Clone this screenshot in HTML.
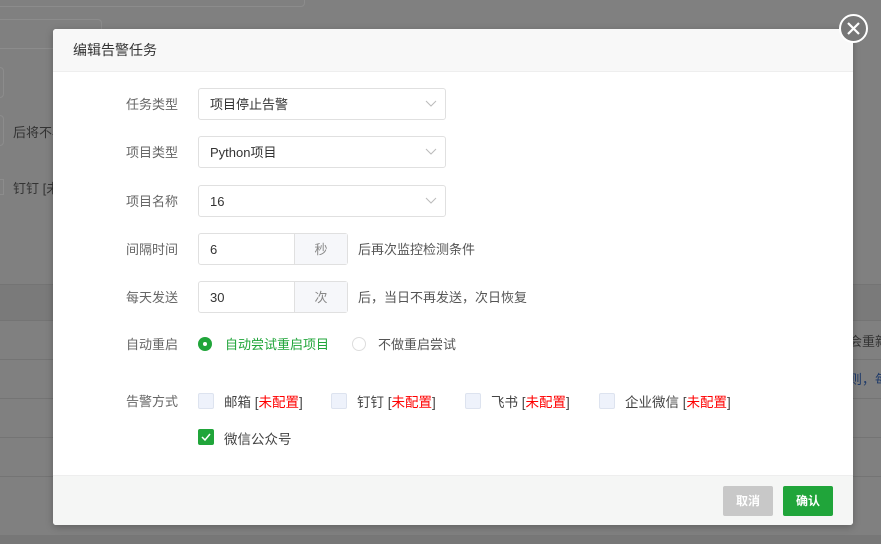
<!DOCTYPE html>
<html><head><meta charset="utf-8"><style>
*{box-sizing:border-box;margin:0;padding:0}
body{width:881px;height:544px;overflow:hidden;background:#808080;font-family:"Liberation Sans","Noto Sans CJK SC",sans-serif;font-size:13px;color:#555;position:relative}
.a{position:absolute;white-space:nowrap}
.bgl{position:absolute;left:0;width:881px;height:1px;background:#747474}
.modal{position:absolute;left:53px;top:29px;width:800px;height:496px;background:#fff;border-radius:3px;overflow:hidden;box-shadow:0 2px 8px rgba(0,0,0,.25)}
.hd{height:43px;background:#f8f8f8;border-bottom:1px solid #eee;padding-left:20px;line-height:43px;font-size:14px;color:#333}
.ft{position:absolute;left:0;bottom:0;width:800px;height:50px;background:#f5f6f5;border-top:1px solid #eee}
.lbl{position:absolute;width:125px;text-align:right;color:#666;font-size:13px;left:0}
.sel{position:absolute;left:145px;width:248px;height:32px;border:1px solid #e0e0e0;border-radius:3px;padding-left:11px;line-height:31px;color:#333}
.sel svg{position:absolute;right:8px;top:11px}
.grp{position:absolute;left:145px;width:150px;height:32px;border:1px solid #e0e0e0;border-radius:3px;display:flex}
.grp .v{width:96px;padding-left:11px;line-height:31px;color:#333;border-right:1px solid #e0e0e0}
.grp .u{flex:1;background:#f6f7fa;text-align:center;line-height:31px;color:#888}
.cb{position:absolute;width:16px;height:16px;background:#eef2fb;border:1px solid #dde3ef;border-radius:2px}
.r{color:#f00}
.ck{font-size:13.5px;color:#444}
</style></head><body>
<div class="a" style="left:-10px;top:-10px;width:315px;height:17px;border:1px solid #8c8c8c;border-radius:4px"></div>
<div class="a" style="left:-10px;top:19px;width:112px;height:30px;border:1px solid #8c8c8c;border-radius:4px"></div>
<div class="a" style="left:-10px;top:67px;width:14px;height:31px;border:1px solid #8c8c8c;border-radius:4px"></div>
<div class="a" style="left:-10px;top:115px;width:14px;height:31px;border:1px solid #8c8c8c;border-radius:4px"></div>
<div class="a" style="left:13px;top:122px;color:#333">后将不再</div>
<div class="a" style="left:-10px;top:179px;width:14px;height:16px;border:1px solid #8c8c8c"></div>
<div class="a" style="left:13px;top:178px;color:#333">钉钉 [未</div>
<div class="a" style="left:0;top:284px;width:881px;height:36px;background:#7a7a7a"></div>
<div class="bgl" style="top:284px"></div><div class="bgl" style="top:320px"></div><div class="bgl" style="top:359px"></div><div class="bgl" style="top:398px"></div><div class="bgl" style="top:437px"></div><div class="bgl" style="top:476px"></div>
<div class="a" style="left:0;top:535px;width:881px;height:9px;background:#777"></div>
<div class="a" style="left:849px;top:331px;color:#333">会重新</div>
<div class="a" style="left:849px;top:369px;color:#1e3a6a">则，每</div>

<div class="modal">
<div class="hd">编辑告警任务</div>
<div style="position:absolute;left:0;top:0;width:800px;height:496px">
<div class="lbl" style="top:65px">任务类型</div>
<div class="sel" style="top:59px">项目停止告警<svg width="12" height="8"><path d="M1 1l5 5 5-5" fill="none" stroke="#bbb"/></svg></div>
<div class="lbl" style="top:113px">项目类型</div>
<div class="sel" style="top:107px">Python项目<svg width="12" height="8"><path d="M1 1l5 5 5-5" fill="none" stroke="#bbb"/></svg></div>
<div class="lbl" style="top:162px">项目名称</div>
<div class="sel" style="top:156px">16<svg width="12" height="8"><path d="M1 1l5 5 5-5" fill="none" stroke="#bbb"/></svg></div>
<div class="lbl" style="top:210px">间隔时间</div>
<div class="grp" style="top:204px"><div class="v">6</div><div class="u">秒</div></div>
<div class="a" style="left:305px;top:210px;color:#555">后再次监控检测条件</div>
<div class="lbl" style="top:258px">每天发送</div>
<div class="grp" style="top:252px"><div class="v">30</div><div class="u">次</div></div>
<div class="a" style="left:305px;top:258px;color:#555">后，当日不再发送，次日恢复</div>
<div class="lbl" style="top:305px">自动重启</div>
<div class="a" style="left:145px;top:308px;width:14px;height:14px;border-radius:50%;background:#20a53a"><div class="a" style="left:5px;top:5px;width:4px;height:4px;border-radius:50%;background:#fff"></div></div>
<div class="a" style="left:172px;top:305px;color:#20a53a">自动尝试重启项目</div>
<div class="a" style="left:299px;top:308px;width:14px;height:14px;border-radius:50%;border:1px solid #ddd"></div>
<div class="a" style="left:325px;top:305px;color:#555">不做重启尝试</div>
<div class="lbl" style="top:362px">告警方式</div>
<div class="cb" style="left:145px;top:364px"></div><div class="a ck" style="left:171px;top:362px">邮箱 [<span class="r">未配置</span>]</div>
<div class="cb" style="left:278px;top:364px"></div><div class="a ck" style="left:304px;top:362px">钉钉 [<span class="r">未配置</span>]</div>
<div class="cb" style="left:412px;top:364px"></div><div class="a ck" style="left:438px;top:362px">飞书 [<span class="r">未配置</span>]</div>
<div class="cb" style="left:546px;top:364px"></div><div class="a ck" style="left:572px;top:362px">企业微信 [<span class="r">未配置</span>]</div>
<div class="cb" style="left:145px;top:400px;background:#20a53a;border-color:#20a53a"><svg width="14" height="14" style="position:absolute;left:0;top:0"><path d="M3 7l3 3 5-6" fill="none" stroke="#fff" stroke-width="1.5"/></svg></div>
<div class="a ck" style="left:171px;top:399px">微信公众号</div>
</div>
<div class="ft">
<div class="a" style="left:670px;top:10px;width:50px;height:30px;background:#c8c8c8;border-radius:2px;color:#fff;text-align:center;line-height:30px;font-size:12px;font-weight:bold">取消</div>
<div class="a" style="left:730px;top:10px;width:50px;height:30px;background:#20a53a;border-radius:2px;color:#fff;text-align:center;line-height:30px;font-size:12px;font-weight:bold">确认</div>
</div>
</div>
<div class="a" style="left:839px;top:14px;width:29px;height:29px;border-radius:50%;background:#777;border:2px solid #fff">
<svg width="25" height="25" style="position:absolute;left:0;top:0"><path d="M7 7l11 11M18 7L7 18" stroke="#fff" stroke-width="2.2"/></svg></div>
</body></html>
